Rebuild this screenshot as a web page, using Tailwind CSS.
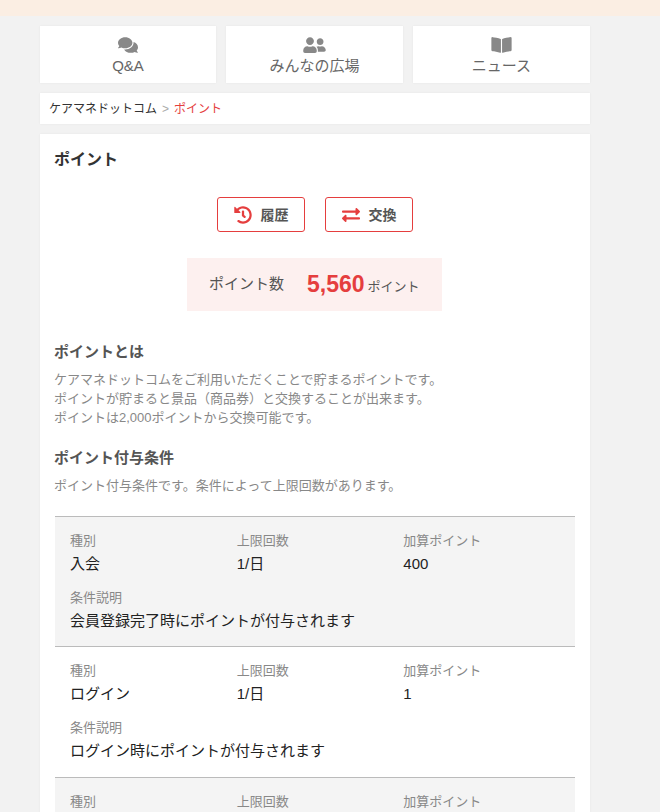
<!DOCTYPE html>
<html lang="ja">
<head>
<meta charset="utf-8">
<title>ポイント</title>
<script src="https://cdn.jsdelivr.net/npm/@tailwindcss/browser@4"></script>
</head>
<body class="bg-[#f2f2f2] font-['Liberation_Sans','Noto_Sans_CJK_JP',sans-serif]">
<div class="h-[812px] overflow-hidden">
  <div class="h-4 bg-[#fbeee3]"></div>
  <div class="w-[550px] ml-10 mt-2.5">
    <nav class="grid grid-cols-[176px_177px_177px] gap-2.5 text-[#666] text-[15px] leading-5">
      <a class="h-[57px] bg-white shadow-[0_0_2px_rgba(0,0,0,0.06)] flex flex-col items-center pt-[10px]">
        <svg class="w-5 h-[18px] fill-[#888]" viewBox="0 0 576 512"><path d="M416 192c0-88.4-93.1-160-208-160S0 103.6 0 192c0 34.3 14.1 65.9 38 92-13.4 30.2-35.5 54.2-35.8 54.5-2.2 2.3-2.8 5.7-1.5 8.7S4.8 352 8 352c36.6 0 66.9-12.3 88.7-25 32.2 15.7 70.3 25 111.3 25 114.9 0 208-71.6 208-160zm122 220c23.9-26 38-57.7 38-92 0-66.9-53.5-124.2-129.3-148.1.9 6.6 1.3 13.3 1.3 20.1 0 105.9-107.7 192-240 192-10.8 0-21.3-.8-31.7-1.9C207.8 439.6 281.8 480 368 480c41 0 79.1-9.2 111.3-25 21.8 12.7 52.1 25 88.7 25 3.2 0 6.1-1.9 7.3-4.8 1.3-2.9.7-6.3-1.5-8.7-.3-.3-22.4-24.2-35.8-54.5z"/></svg>
        <span class="mt-[2px]">Q&amp;A</span>
      </a>
      <a class="h-[57px] bg-white shadow-[0_0_2px_rgba(0,0,0,0.06)] flex flex-col items-center pt-[10px]">
        <svg class="w-[23px] h-[18px] fill-[#888]" viewBox="0 0 640 512"><path d="M192 256c61.9 0 112-50.1 112-112S253.9 32 192 32 80 82.1 80 144s50.1 112 112 112zm76.8 32h-8.3c-20.8 10-43.9 16-68.5 16s-47.6-6-68.5-16h-8.3C51.6 288 0 339.6 0 403.2V432c0 26.5 21.5 48 48 48h288c26.5 0 48-21.5 48-48v-28.8c0-63.6-51.6-115.2-115.2-115.2zM480 256c53 0 96-43 96-96s-43-96-96-96-96 43-96 96 43 96 96 96zm48 32h-3.8c-13.9 4.8-28.6 8-44.2 8s-30.3-3.2-44.2-8H432c-20.4 0-39.2 5.9-55.7 15.4 24.4 26.3 39.7 61.2 39.7 99.8v38.4c0 2.2-.5 4.3-.6 6.4H592c26.5 0 48-21.5 48-48 0-61.9-50.1-112-112-112z"/></svg>
        <span class="mt-[2px]">みんなの広場</span>
      </a>
      <a class="h-[57px] bg-white shadow-[0_0_2px_rgba(0,0,0,0.06)] flex flex-col items-center pt-[10px]">
        <svg class="w-[21px] h-[18px] fill-[#888]" viewBox="0 0 576 512"><path d="M542.22 32.05c-54.8 3.11-163.72 14.43-230.96 55.59-4.64 2.84-7.27 7.89-7.27 13.17v363.87c0 11.55 12.63 18.85 23.28 13.49 69.18-34.82 169.23-44.32 218.7-46.92 16.89-.89 30.02-14.43 30.02-30.66V62.75c.01-17.71-15.35-31.74-33.77-30.7zM264.73 87.64C197.5 46.48 88.58 35.17 33.78 32.05 15.36 31.01 0 45.04 0 62.75V400.6c0 16.24 13.13 29.78 30.02 30.66 49.49 2.6 149.59 12.11 218.77 46.95 10.62 5.35 23.21-1.94 23.21-13.46V100.63c0-5.29-2.62-10.14-7.27-12.99z"/></svg>
        <span class="mt-[2px]">ニュース</span>
      </a>
    </nav>
    <div class="mt-2.5 h-[31px] bg-white shadow-[0_0_2px_rgba(0,0,0,0.06)] pl-[9px] flex items-center text-xs text-[#333]">
      <span>ケアマネドットコム</span><span class="text-[#aaa] mx-[5px]">&gt;</span><span class="text-[#e53e3e]">ポイント</span>
    </div>
    <main class="mt-2.5 bg-white shadow-[0_0_2px_rgba(0,0,0,0.06)] pt-[16px] pl-[14px] pr-[15px] h-[700px]">
      <h1 class="text-base leading-5 font-bold text-[#333]">ポイント</h1>
      <div class="flex justify-center gap-5 mt-[27px] ml-px">
        <a class="w-[88px] h-[35px] border border-[#e53e3e] rounded-[3px] flex items-center justify-center gap-[9px] text-sm font-bold text-[#555]">
          <svg class="w-[18px] h-[18px] fill-[#e53e3e]" viewBox="0 0 512 512"><path d="M504 255.531c.253 136.64-111.18 248.372-247.82 248.468-59.015.042-113.223-20.53-155.822-54.911-11.077-8.94-11.905-25.541-1.839-35.607l11.267-11.267c8.609-8.609 22.353-9.551 31.891-1.984C173.062 425.135 212.781 440 256 440c101.705 0 184-82.311 184-184 0-101.705-82.311-184-184-184-48.814 0-93.149 18.969-126.068 49.932l50.754 50.754c10.08 10.08 2.941 27.314-11.313 27.314H24c-8.837 0-16-7.163-16-16V38.627c0-14.254 17.234-21.393 27.314-11.314l49.372 49.372C129.209 34.136 189.552 8 256 8c136.81 0 247.747 110.78 248 247.531zm-180.912 78.784l9.823-12.63c8.138-10.463 6.253-25.542-4.21-33.679L288 256.349V152c0-13.255-10.745-24-24-24h-16c-13.255 0-24 10.745-24 24v135.651l65.409 50.874c10.463 8.137 25.541 6.253 33.679-4.21z"/></svg>
          <span>履歴</span>
        </a>
        <a class="w-[88px] h-[35px] border border-[#e53e3e] rounded-[3px] flex items-center justify-center gap-[9px] text-sm font-bold text-[#555]">
          <svg class="w-[18px] h-[18px] fill-[#e53e3e]" viewBox="0 0 512 512"><path d="M0 168v-16c0-13.255 10.745-24 24-24h360V80c0-21.367 25.899-32.042 40.971-16.971l80 80c9.372 9.373 9.372 24.569 0 33.941l-80 80C409.956 271.982 384 261.456 384 240v-48H24c-13.255 0-24-10.745-24-24zm488 152H128v-48c0-21.314-25.862-32.08-40.971-16.971l-80 80c-9.372 9.373-9.372 24.569 0 33.941l80 80C102.057 463.997 128 453.437 128 432v-48h360c13.255 0 24-10.745 24-24v-16c0-13.255-10.745-24-24-24z"/></svg>
          <span>交換</span>
        </a>
      </div>
      <div class="mx-auto mt-[26px] w-[255px] h-[53px] bg-[#fdf0ef] flex items-center pl-[22px] text-[#555]">
        <span class="text-[15px]">ポイント数</span>
        <span class="ml-[23px] text-[23px] font-bold text-[#e53e3e]">5,560</span>
        <span class="ml-[3px] mt-[5px] text-[13px]">ポイント</span>
      </div>
      <h2 class="mt-[31px] text-[15px] leading-5 font-bold text-[#555]">ポイントとは</h2>
      <p class="mt-2 text-[13px] leading-[19px] text-[#888]">ケアマネドットコムをご利用いただくことで貯まるポイントです。<br>ポイントが貯まると景品（商品券）と交換することが出来ます。<br>ポイントは2,000ポイントから交換可能です。</p>
      <h2 class="mt-[21px] text-[15px] leading-5 font-bold text-[#555]">ポイント付与条件</h2>
      <p class="mt-[8px] text-[13px] leading-[19px] text-[#888]">ポイント付与条件です。条件によって上限回数があります。</p>
      <div class="mt-[21px] ml-px">
        <section class="w-[520px] h-[130px] border-t border-[#bbb] bg-[#f4f4f4] pt-[16px] pl-[15px] pr-[5px]">
          <div class="grid grid-cols-3">
            <div><p class="text-[13px] leading-4 text-[#888]">種別</p><p class="mt-[5px] text-[15px] leading-5 text-[#222]">入会</p></div>
            <div><p class="text-[13px] leading-4 text-[#888]">上限回数</p><p class="mt-[5px] text-[15px] leading-5 text-[#222]">1/日</p></div>
            <div><p class="text-[13px] leading-4 text-[#888]">加算ポイント</p><p class="mt-[5px] text-[15px] leading-5 text-[#222]">400</p></div>
          </div>
          <p class="mt-[16px] text-[13px] leading-4 text-[#888]">条件説明</p>
          <p class="mt-[5px] text-[15px] leading-5 text-[#222]">会員登録完了時にポイントが付与されます</p>
        </section>
        <section class="w-[520px] h-[131px] border-t border-[#bbb] pt-[16px] pl-[15px] pr-[5px]">
          <div class="grid grid-cols-3">
            <div><p class="text-[13px] leading-4 text-[#888]">種別</p><p class="mt-[5px] text-[15px] leading-5 text-[#222]">ログイン</p></div>
            <div><p class="text-[13px] leading-4 text-[#888]">上限回数</p><p class="mt-[5px] text-[15px] leading-5 text-[#222]">1/日</p></div>
            <div><p class="text-[13px] leading-4 text-[#888]">加算ポイント</p><p class="mt-[5px] text-[15px] leading-5 text-[#222]">1</p></div>
          </div>
          <p class="mt-[16px] text-[13px] leading-4 text-[#888]">条件説明</p>
          <p class="mt-[5px] text-[15px] leading-5 text-[#222]">ログイン時にポイントが付与されます</p>
        </section>
        <section class="w-[520px] h-[130px] border-t border-[#bbb] bg-[#f4f4f4] pt-[16px] pl-[15px] pr-[5px]">
          <div class="grid grid-cols-3">
            <div><p class="text-[13px] leading-4 text-[#888]">種別</p></div>
            <div><p class="text-[13px] leading-4 text-[#888]">上限回数</p></div>
            <div><p class="text-[13px] leading-4 text-[#888]">加算ポイント</p></div>
          </div>
        </section>
      </div>
    </main>
  </div>
</div>
</body>
</html>
